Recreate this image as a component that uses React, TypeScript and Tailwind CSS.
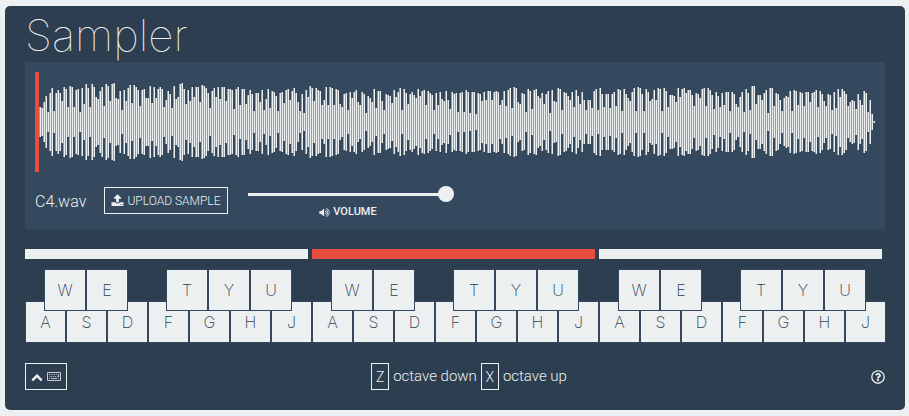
import { useState } from "react";
import type { ReactNode } from "react";
import { FaRegQuestionCircle } from "react-icons/fa";

const PEAKS: number[] = [
  15, 14, 20, 26, 10, 29, 34, 11, 29, 32, 29, 21, 35, 33, 15, 36, 35, 15, 32, 33, 10, 34, 18, 38, 34, 15, 38, 35,
  25, 23, 31, 35, 16, 38, 36, 21, 38, 39, 24, 23, 31, 12, 32, 21, 34, 37, 19, 37, 35, 32, 16, 32, 33, 24, 24, 36,
  19, 35, 24, 33, 35, 33, 15, 22, 31, 28, 14, 36, 23, 25, 38, 39, 33, 18, 32, 21, 35, 25, 35, 35, 20, 37, 36, 34,
  29, 14, 31, 34, 25, 35, 23, 35, 35, 21, 33, 33, 32, 13, 33, 35, 17, 33, 33, 18, 27, 32, 28, 11, 29, 29, 20, 32,
  12, 23, 33, 14, 31, 30, 26, 11, 29, 30, 19, 32, 33, 22, 31, 34, 29, 20, 11, 28, 9, 32, 25, 36, 34, 21, 34, 32,
  31, 17, 22, 35, 17, 35, 34, 17, 33, 32, 18, 15, 28, 29, 12, 30, 24, 30, 32, 20, 17, 30, 28, 9, 26, 24, 20, 33,
  14, 31, 31, 21, 12, 28, 27, 26, 19, 32, 25, 30, 34, 12, 33, 29, 18, 28, 30, 27, 24, 33, 26, 31, 32, 17, 31, 29,
  27, 12, 29, 17, 30, 23, 21, 31, 22, 13, 30, 28, 29, 10, 29, 30, 10, 32, 30, 9, 30, 30, 8, 29, 28, 21, 30, 22,
  31, 31, 22, 30, 31, 30, 17, 22, 31, 16, 32, 34, 14, 35, 34, 20, 18, 29, 28, 10, 33, 31, 13, 32, 33, 26, 24, 29,
  18, 28, 31, 9, 32, 21, 20, 34, 33, 12, 30, 29, 26, 22, 30, 15, 32, 26, 18, 30, 22, 12, 22, 22, 14, 31, 33, 12,
  34, 28, 15, 28, 28, 14, 28, 30, 16, 33, 32, 11, 33, 28, 24, 21, 30, 34, 11, 35, 34, 28, 11, 33, 30, 21, 23, 32,
  22, 34, 33, 11, 34, 31, 15, 27, 27, 26, 20, 34, 25, 33, 34, 29, 32, 32, 27, 16, 29, 28, 24, 33, 34, 16, 34, 32,
  27, 13, 30, 26, 15, 29, 17, 30, 30, 11, 30, 28, 18, 15, 25, 30, 10, 33, 29, 12, 36, 36, 18, 27, 27, 22, 29, 32,
  9, 34, 34, 16, 29, 28, 22, 11, 24, 26, 25, 31, 11, 32, 31, 17, 30, 29, 16, 30, 30, 20, 29, 30, 32, 15, 31, 28,
  21, 16, 28, 27, 12, 30, 14, 33, 25, 33, 31, 28, 16, 20, 22, 21, 13, 28, 22, 17, 31, 29, 10, 22, 8, 1,
];

const UPLOAD =
  "M1344 1472q0-26-19-45t-45-19-45 19-19 45 19 45 45 19 45-19 19-45zm256 0q0-26-19-45t-45-19-45 19-19 45 19 45 45 19 45-19 19-45zm128-224v320q0 40-28 68t-68 28h-1472q-40 0-68-28t-28-68v-320q0-40 28-68t68-28h427q21 56 70.5 92t110.5 36h256q61 0 110.5-36t70.5-92h427q40 0 68 28t28 68zm-325-648q-17 40-59 40h-256v448q0 26-19 45t-45 19h-256q-26 0-45-19t-19-45v-448h-256q-42 0-59-40-17-39 14-69l448-448q18-19 45-19t45 19l448 448q31 30 14 69z";
const VOLUME =
  "M832 352v1088q0 26-19 45t-45 19-45-19l-333-333h-262q-26 0-45-19t-19-45v-384q0-26 19-45t45-19h262l333-333q19-19 45-19t45 19 19 45zm384 544q0 76-42.5 141.5t-112.5 93.5q-10 5-25 5-26 0-45-18.5t-19-45.5q0-21 12-35.5t29-25 34-23 29-36 12-56.5-12-56.5-29-36-34-23-29-25-12-35.5q0-27 19-45.5t45-18.5q15 0 25 5 70 27 112.5 93t42.5 142zm256 0q0 153-85 282.5t-225 188.5q-13 5-25 5-27 0-46-19t-19-45q0-39 39-59 56-29 76-44 74-54 115.5-135.5t41.5-173.5-41.5-173.5-115.5-135.5q-20-15-76-44-39-20-39-59 0-26 19-45t45-19q13 0 26 5 140 59 225 188.5t85 282.5zm256 0q0 230-127 422.5t-338 283.5q-13 5-26 5-26 0-45-19t-19-45q0-36 39-59 7-4 22.5-10.5t22.5-10.5q46-25 82-51 123-91 192-227t69-289-69-289-192-227q-36-26-82-51-7-4-22.5-10.5t-22.5-10.5q-39-23-39-59 0-26 19-45t45-19q13 0 26 5 211 91 338 283.5t127 422.5z";
const CHEVRON_UP =
  "M1683 1331l-166 165q-19 19-45 19t-45-19l-531-531-531 531q-19 19-45 19t-45-19l-166-165q-19-19-19-45.5t19-45.5l742-741q19-19 45-19t45 19l742 741q19 19 19 45.5t-19 45.5z";

function Glyph({ d, className }: { d: string; className: string }) {
  return (
    <svg viewBox="0 0 1792 1792" className={className} fill="currentColor" aria-hidden="true">
      <path d={d} />
    </svg>
  );
}

function KeyboardGlyph() {
  return (
    <svg viewBox="0 0 14 9" className="h-[9px] w-[14px]" fill="currentColor" aria-hidden="true">
      <path
        opacity="0.8"
        fillRule="evenodd"
        d="M1 0h12a1 1 0 0 1 1 1v7a1 1 0 0 1-1 1H1a1 1 0 0 1-1-1V1a1 1 0 0 1 1-1zm0 1v7h12V1z"
      />
      <g opacity="0.7">
        {[2, 3.7, 5.4, 7.1, 8.8].map((x) => (
          <rect key={x} x={x} y="2" width="1" height="1" />
        ))}
        {[2.6, 4.4, 6.2, 8].map((x) => (
          <rect key={x} x={x} y="4" width="1" height="1" />
        ))}
        <path d="M2 6h1v1H2zM4 6h6v1H4zM11 6h1v1h-1zM11 2h1v3h-2V4h1z" />
      </g>
    </svg>
  );
}

function Waveform() {
  return (
    <svg
      viewBox="0 0 840 100"
      preserveAspectRatio="none"
      shapeRendering="crispEdges"
      className="block h-[100px] w-full"
      role="img"
      aria-label="Waveform"
    >
      {PEAKS.map((p, i) => (
        <g key={i}>
          <rect x={4 + i * 2} y={50 - p} width="1" height={p * 2} fill="#939fa8" />
          <rect x={5 + i * 2} y={50 - p} width="1" height={p * 2} fill="#ecf0f1" />
        </g>
      ))}
      <rect x="0" y="0" width="4" height="100" fill="#e74c3c" />
    </svg>
  );
}

function BlackKey({ children }: { children: ReactNode }) {
  return (
    <button className="flex size-[42px] items-center justify-center border border-[#34495e] bg-[#ecf0f1]">
      {children}
    </button>
  );
}

function Octave({ active, onSelect }: { active: boolean; onSelect: () => void }) {
  return (
    <div className="shrink-0">
      <button
        aria-label="Select octave"
        onClick={onSelect}
        className={active ? "block h-[10px] w-[283px] bg-[#e74c3c]" : "block h-[10px] w-[283px] bg-[#ecf0f1]"}
      />
      <div className="mt-[10px] font-['Inter','Liberation_Sans',sans-serif] text-base font-extralight text-[#2c3e50]">
        <div className="relative z-10 flex gap-[38px] pl-[19px]">
          <div className="flex">
            {["W", "E"].map((k) => (
              <BlackKey key={k}>{k}</BlackKey>
            ))}
          </div>
          <div className="flex">
            {["T", "Y", "U"].map((k) => (
              <BlackKey key={k}>{k}</BlackKey>
            ))}
          </div>
        </div>
        <div className="-mt-[10px] flex">
          {["A", "S", "D", "F", "G", "H", "J"].map((k) => (
            <button
              key={k}
              className="flex h-[42px] w-[41px] items-center justify-center border border-[#34495e] bg-[#ecf0f1]"
            >
              {k}
            </button>
          ))}
        </div>
      </div>
    </div>
  );
}

export default function App() {
  const [octave, setOctave] = useState(1);
  return (
    <div className="min-h-screen bg-[#ecf0f1] py-[6px] pr-1 pl-[5px] font-['Roboto','Liberation_Sans',sans-serif] font-light text-[#ecf0f1]">
      <main className="rounded-[5px] bg-[#2c3e50] px-5 pb-5">
        <h1 className="h-14 pt-[3px] font-['Inter','Liberation_Sans',sans-serif] text-[44px] leading-[52px] font-thin">
          Sampler
        </h1>

        <section className="bg-[#34495e] p-[10px] pb-[9px]">
          <Waveform />
          <div className="mt-[15px] flex items-start">
            <span className="w-[69px] text-base leading-[29px]">C4.wav</span>
            <button className="flex h-[27px] w-[124px] items-center justify-center gap-[3px] border border-[#ecf0f1] text-xs">
              <Glyph d={UPLOAD} className="size-[13px]" />
              UPLOAD SAMPLE
            </button>
            <div className="ml-5 w-[200px]">
              <input
                id="volume"
                type="range"
                min="0"
                max="100"
                defaultValue="100"
                className="block h-[14px] w-[206px] appearance-none bg-transparent bg-[linear-gradient(#ecf0f1,#ecf0f1)] bg-[length:198px_3px] bg-[position:left_center] bg-no-repeat [&::-webkit-slider-thumb]:size-4 [&::-webkit-slider-thumb]:appearance-none [&::-webkit-slider-thumb]:rounded-full [&::-webkit-slider-thumb]:bg-[#ecf0f1]"
              />
              <label
                htmlFor="volume"
                className="mt-[3px] flex items-center justify-center gap-[3px] text-[11px] leading-4 font-medium"
              >
                <Glyph d={VOLUME} className="size-[11px]" />
                VOLUME
              </label>
            </div>
          </div>
        </section>

        <section className="mt-5 flex" aria-label="Keyboard">
          {[0, 1, 2].map((i) => (
            <Octave key={i} active={i === octave} onSelect={() => setOctave(i)} />
          ))}
        </section>

        <footer className="mt-5 flex items-center justify-between">
          <button
            aria-label="Hide keyboard"
            className="flex h-[27px] w-[42px] items-center justify-center gap-1 border border-[#ecf0f1]"
          >
            <Glyph d={CHEVRON_UP} className="size-3" />
            <KeyboardGlyph />
          </button>
          <p className="flex items-center gap-1 text-[15px]">
            <kbd className="flex h-[27px] w-[18px] items-center justify-center border border-[#ecf0f1] font-[inherit] text-sm">
              Z
            </kbd>
            octave down
            <kbd className="flex h-[27px] w-[18px] items-center justify-center border border-[#ecf0f1] font-[inherit] text-sm">
              X
            </kbd>
            octave up
          </p>
          <button aria-label="Help">
            <FaRegQuestionCircle className="size-[14px]" />
          </button>
        </footer>
      </main>
    </div>
  );
}
